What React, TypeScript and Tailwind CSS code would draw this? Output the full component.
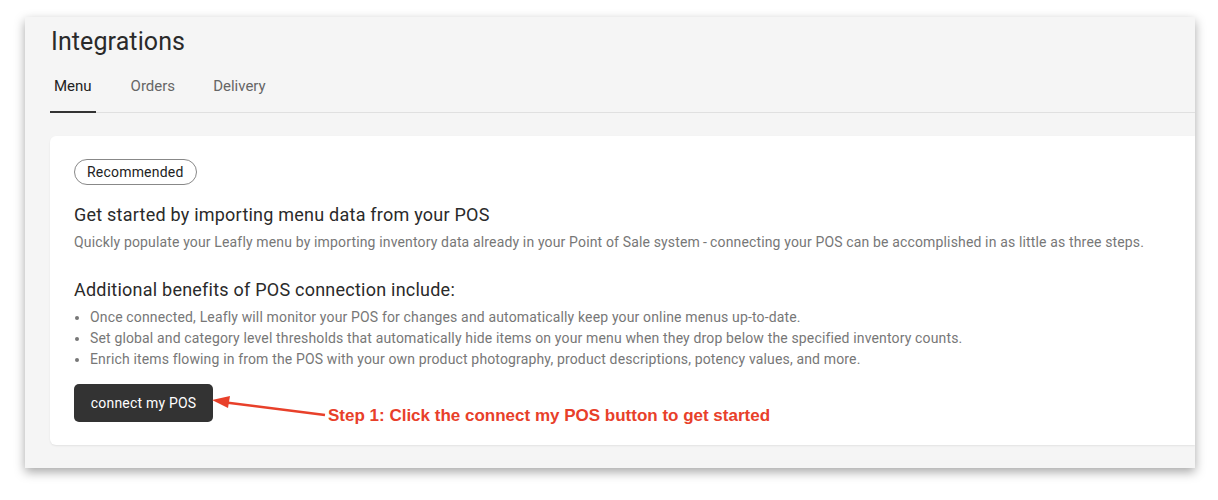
import React from "react";

export default function App() {
  const font = { fontFamily: 'Roboto, "Liberation Sans", sans-serif' };
  return (
    <div className="w-[1218px] h-[500px] bg-white relative overflow-hidden" style={font}>
      <div className="absolute left-[25px] top-[17px] w-[1170px] h-[451px] bg-[#f5f5f5] shadow-[0_4px_10px_rgba(0,0,0,0.35)] overflow-hidden">
        <div className="pl-[25px]">
          <h1 className="text-[25px] leading-[50px] text-[#2a2a2a] tracking-[0.1px] pl-px">Integrations</h1>
          <div className="flex border-b border-[#e0e0e0] h-[46px] items-stretch">
            <div className="px-[4px] border-b-2 border-[#333] text-[15px] text-[#222] flex items-start pt-[8px] -mb-px">Menu</div>
            <div className="ml-[35px] text-[15px] text-[#666] flex items-start pt-[8px]">Orders</div>
            <div className="ml-[38px] text-[15px] text-[#666] flex items-start pt-[8px]">Delivery</div>
          </div>
          <div className="mt-[23px] bg-white rounded-l-[6px] h-[309px] pl-[24px] pt-[23px] shadow-[0_1px_2px_rgba(0,0,0,0.08)]">
            <span className="inline-block border border-[#888] rounded-full px-[12px] h-[26px] leading-[24px] text-[14px] text-[#222] tracking-[0.2px]">Recommended</span>
            <h2 className="mt-[17px] text-[18px] leading-[26px] text-[#2a2a2a] tracking-[0.23px]">Get started by importing menu data from your POS</h2>
            <p className="mt-[1px] text-[14px] leading-[26px] text-[#777] tracking-[0.15px]">Quickly populate your Leafly menu by importing inventory data already in your Point of Sale system{"\u2009"}-{"\u2009"}connecting your POS can be accomplished in as little as three steps.</p>
            <h2 className="mt-[22px] text-[18px] leading-[26px] text-[#2a2a2a] tracking-[0.23px]">Additional benefits of POS connection include:</h2>
            <ul className="text-[14px] leading-[21px] text-[#777] list-disc pl-[16px] mt-[4px] tracking-[0.15px]">
              <li>Once connected, Leafly will monitor your POS for changes and automatically keep your online menus up-to-date.</li>
              <li>Set global and category level thresholds that automatically hide items on your menu when they drop below the specified inventory counts.</li>
              <li>Enrich items flowing in from the POS with your own product photography, product descriptions, potency values, and more.</li>
            </ul>
            <button className="mt-[14px] bg-[#333] text-white text-[14px] rounded-[5px] w-[139px] h-[38px] tracking-[0.2px]">connect my POS</button>
          </div>
        </div>
      </div>
      <svg className="absolute left-0 top-0" width="1218" height="500">
        <line x1="222" y1="402" x2="325" y2="415" stroke="#e8402a" strokeWidth="2.5" />
        <polygon points="212,400 230,396 228,408" fill="#e8402a" />
      </svg>
      <div className="absolute left-[328px] top-[405px] text-[17px] font-bold text-[#e8402a] leading-[22px]" style={{ fontFamily: '"Liberation Sans", Arial, sans-serif' }}>
        Step 1: Click the connect my POS button to get started
      </div>
    </div>
  );
}
